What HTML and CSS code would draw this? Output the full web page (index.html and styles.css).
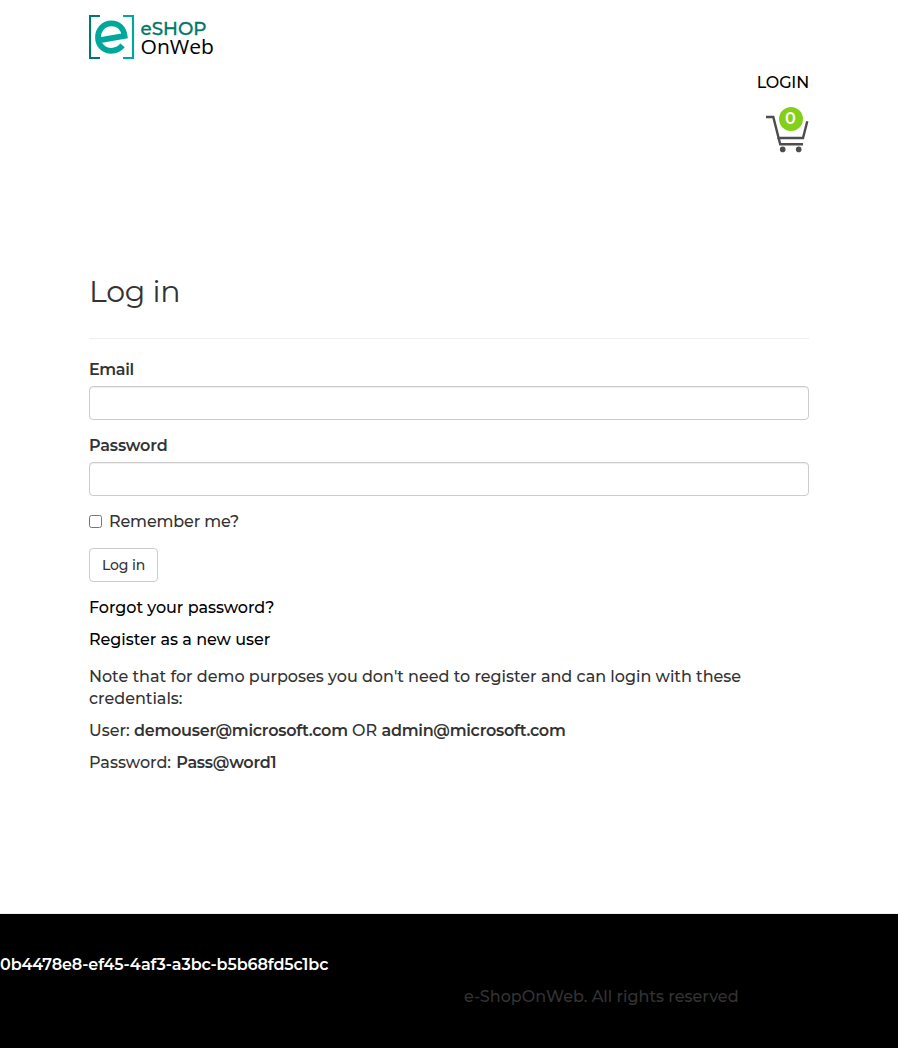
FILE: index.html
```html
<!DOCTYPE html>
<html lang="en">
<head>
<meta charset="utf-8">
<title>Log in - eShopOnWeb</title>
<link rel="stylesheet" href="styles.css">
</head>
<body>
<header class="container header">
  <a class="brand" href="#">
    <svg width="126" height="46" viewBox="0 0 126 46" role="img" aria-label="eShopOnWeb">
      <path d="M11 2H1V44H11" fill="none" stroke="#00796b" stroke-width="2.2"/>
      <path d="M34 2H44V44H34" fill="none" stroke="#00a89c" stroke-width="2.2"/>
      <path d="M10 26.3L35.6 21.9C34.6 14 29.2 9.4 22.4 9.4C14.6 9.4 9 15.5 9 23.2C9 31 14.7 36.8 22.4 36.8C27 36.8 30.7 34.8 33.6 31.4" fill="none" stroke="#00a89c" stroke-width="5.8"/>
      <text class="brand-top" x="51.5" y="20.5" textLength="66" lengthAdjust="spacingAndGlyphs">eSHOP</text>
      <text class="brand-bottom" x="51.5" y="40" textLength="73.5" lengthAdjust="spacingAndGlyphs">OnWeb</text>
    </svg>
  </a>
  <div class="account">
    <a class="login-link" href="#">LOGIN</a>
    <a class="cart" href="#">
      <svg width="44" height="40" viewBox="0 0 44 40" aria-hidden="true">
        <path d="M1 4H8.3L15.2 31.2H38M12.2 25H38L42.3 8.3" fill="none" stroke="#4d4d4d" stroke-width="2.4"/>
        <circle cx="17.7" cy="36.4" r="2.8" fill="#4d4d4d"/>
        <circle cx="33.7" cy="36.4" r="2.8" fill="#4d4d4d"/>
      </svg>
      <span class="badge">0</span>
    </a>
  </div>
</header>
<main class="container">
  <h2 class="title">Log in</h2>
  <hr class="rule">
  <form>
    <div class="field">
      <label class="label email-label" for="email">Email</label>
      <input class="input" id="email" type="email">
    </div>
    <div class="field">
      <label class="label password-label" for="password">Password</label>
      <input class="input" id="password" type="password">
    </div>
    <label class="remember"><input class="check" type="checkbox"><span>Remember me?</span></label>
    <button class="button" type="button">Log in</button>
    <p class="text"><a class="link forgot" href="#">Forgot your password?</a></p>
    <p class="text"><a class="link register" href="#">Register as a new user</a></p>
  </form>
  <div class="notes">
    <p class="text note">Note that for demo purposes you don't need to register and can login with these credentials:</p>
    <p class="text users">User: <b>demouser@microsoft.com</b> OR <b>admin@microsoft.com</b></p>
    <p class="text pass">Password: <b>Pass@word1</b></p>
  </div>
</main>
<footer class="footer">
  <div class="footer-id"><span>0b4478e8-ef45-4af3-a3bc-b5b68fd5c1bc</span></div>
  <div class="footer-copy"><span>e-ShopOnWeb. All rights reserved</span></div>
</footer>
</body>
</html>
```
FILE: styles.css
```css
* { box-sizing: border-box; }
body {
  margin: 0;
  min-height: 1048px;
  display: flex;
  flex-direction: column;
  background: #fff;
  color: #333;
  font: 500 16px/22px Montserrat, Inter, sans-serif;
}
a { color: #000; text-decoration: none; }
b { font-weight: 600; letter-spacing: -0.25px; }
.container { width: 720px; margin: 0 auto; }
.header { height: 275px; padding-top: 14px; }
.brand, .brand svg { display: block; }
.brand { width: 126px; }
.brand-top { font: 500 18.5px Montserrat, Inter, sans-serif; fill: #00796b; stroke: #00796b; stroke-width: 0.3px; }
.brand-bottom { font: 400 20px "Open Sans", "Noto Sans", sans-serif; fill: #000; }
.account { display: flex; flex-direction: column; align-items: flex-end; padding-top: 12px; }
.login-link { letter-spacing: -0.15px; }
.cart { position: relative; width: 44px; height: 40px; margin-top: 19px; }
.cart svg { display: block; }
.badge {
  position: absolute;
  left: 14px;
  top: -6px;
  width: 24px;
  height: 24px;
  padding-right: 1px;
  border-radius: 50%;
  background: #83d01b;
  color: #fff;
  font-weight: 600;
  line-height: 23px;
  text-align: center;
}
.title { margin: 0; font-size: 30px; line-height: 33px; font-weight: 450; letter-spacing: -0.3px; }
.rule { margin: 30px 0 20px; border: 0; border-top: 1px solid #eee; }
.field { margin-bottom: 15px; }
.label { display: block; width: max-content; margin-bottom: 5px; font-weight: 600; letter-spacing: -0.15px; }
.email-label { letter-spacing: -0.35px; }
.input {
  display: block;
  width: 100%;
  height: 34px;
  padding: 6px 12px;
  border: 1px solid #ccc;
  border-radius: 4px;
  box-shadow: inset 0 1px 1px rgba(0, 0, 0, 0.075);
}
.remember { display: flex; align-items: flex-start; gap: 7px; width: max-content; height: 22px; letter-spacing: -0.15px; }
.check { margin: 4px 0 0; width: 13px; height: 13px; }
.button {
  display: block;
  width: 69px;
  height: 34px;
  margin: 15px 0;
  padding: 0;
  border: 1px solid #ccc;
  border-radius: 4px;
  background: #fff;
  color: #333;
  font: 500 14px/20px Montserrat, Inter, sans-serif;
  letter-spacing: -0.15px;
}
.text { margin: 0 0 10px; }
.link { letter-spacing: -0.04px; }
.note { letter-spacing: -0.02px; }
.pass b { margin-left: 1px; }
.notes { padding-top: 5px; }
.footer {
  margin-top: auto;
  height: 135px;
  padding: 40px 0;
  border-top: 1px solid #eee;
  background: #000;
}
.footer-id { color: #fff; font-weight: 600; margin-bottom: 10px; letter-spacing: -0.11px; }
.footer-copy { padding-left: 464px; }
```
